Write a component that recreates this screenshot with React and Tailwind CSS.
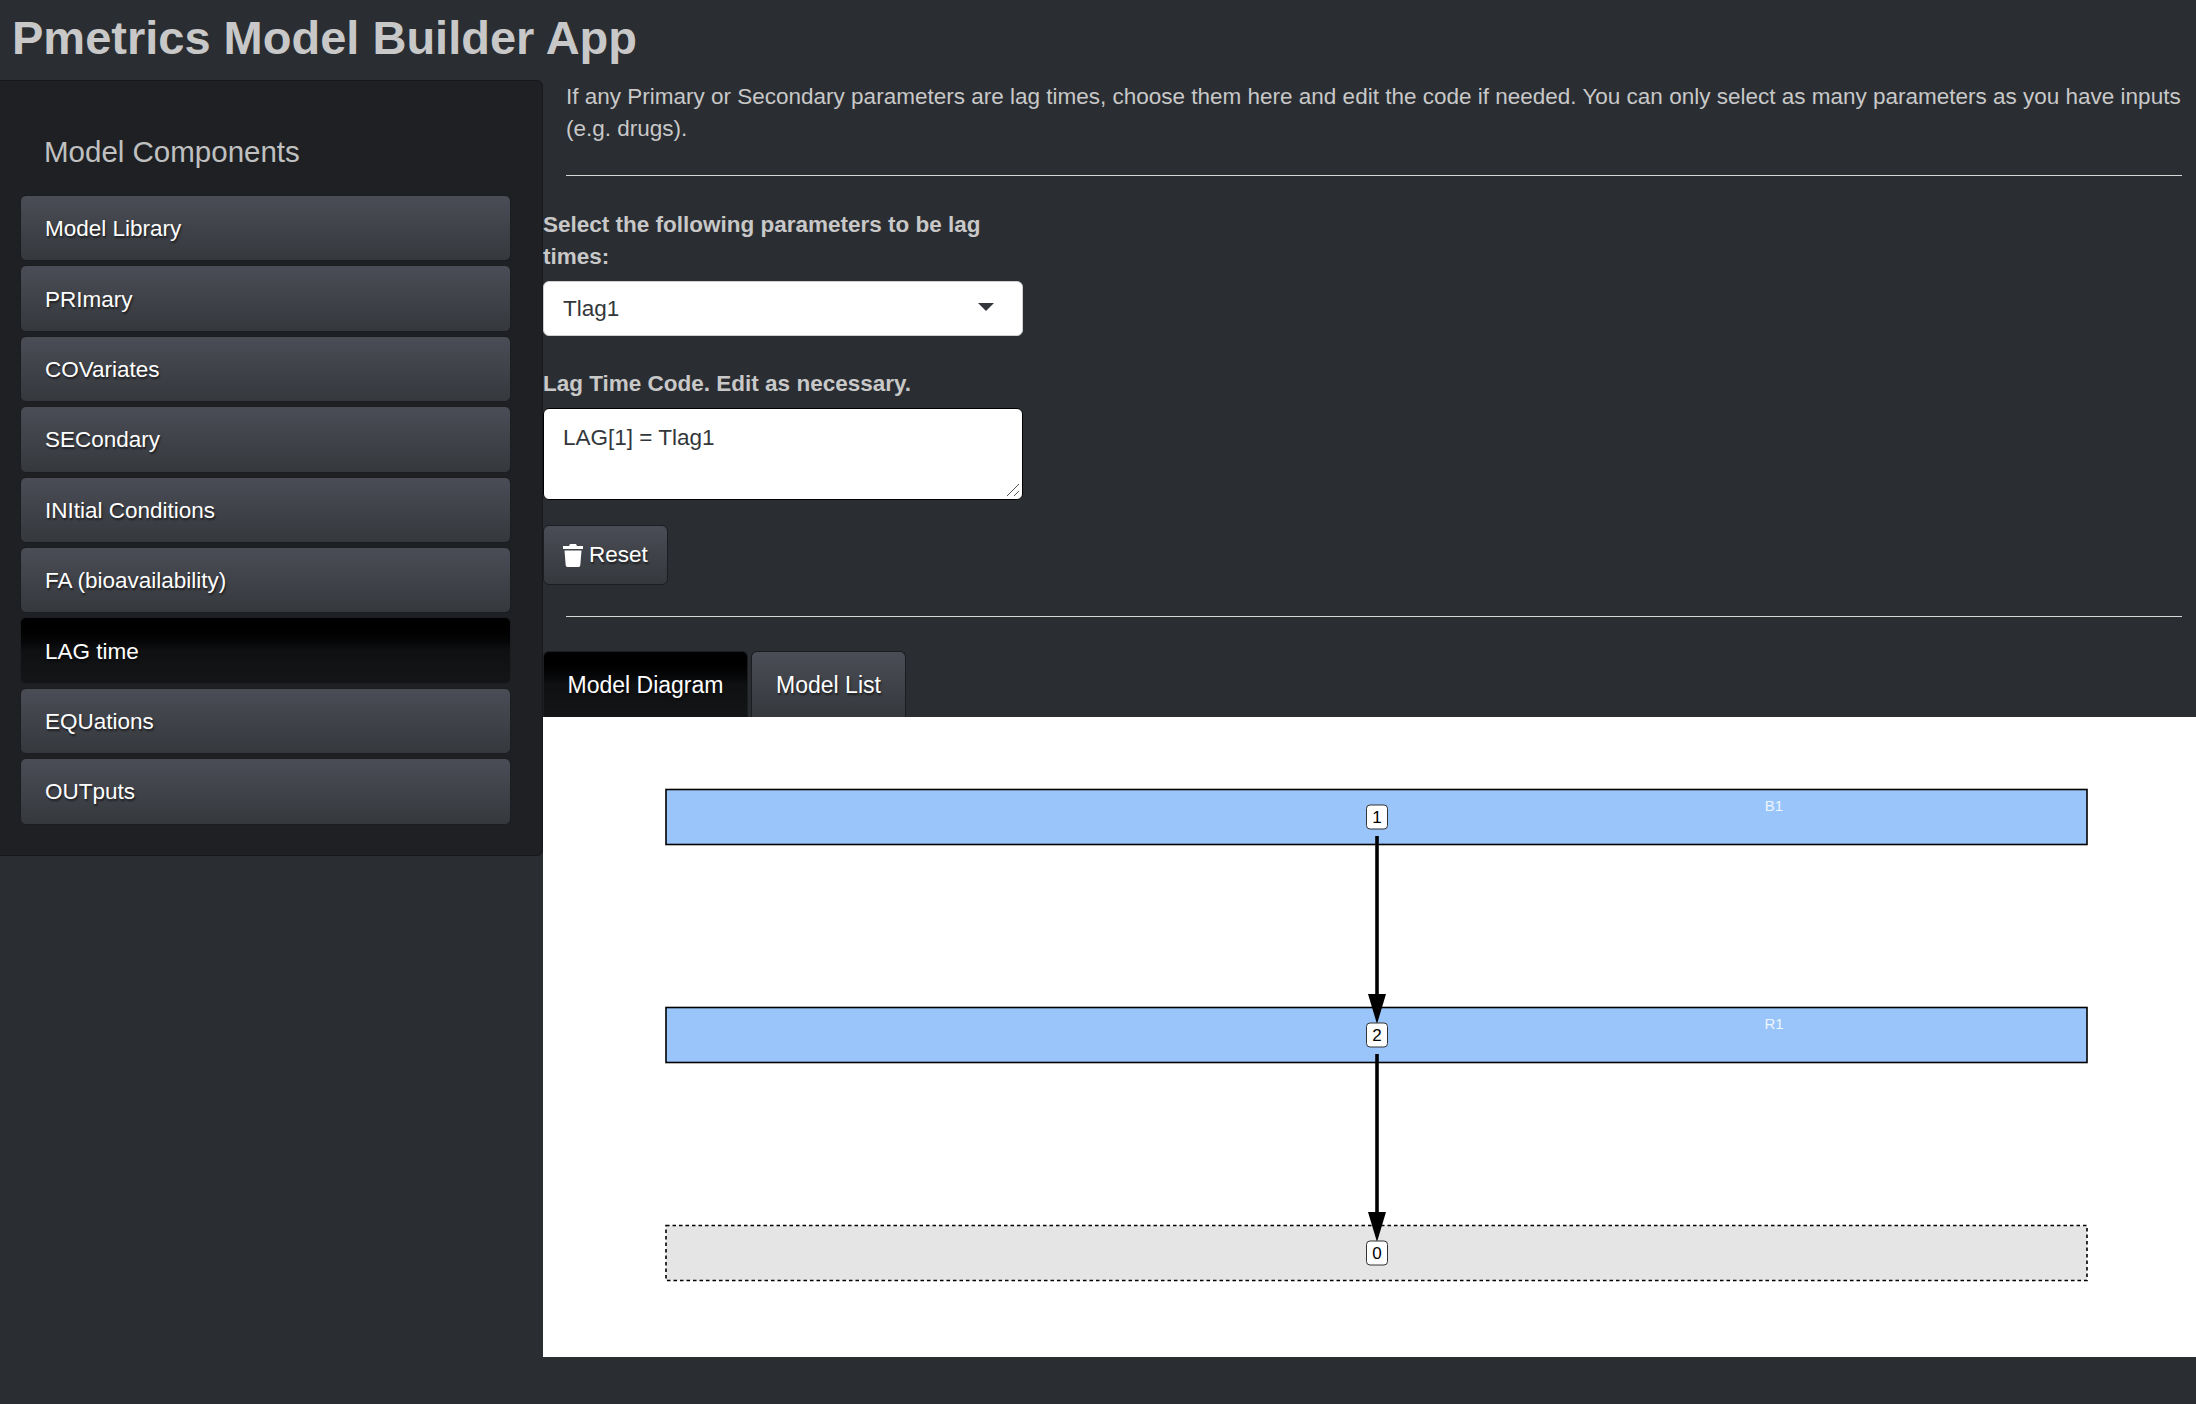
const components = [
    'Model Library',
    'PRImary',
    'COVariates',
    'SECondary',
    'INItial Conditions',
    'FA (bioavailability)',
    'LAG time',
    'EQUations',
    'OUTputs',
];

const idleButton = 'border-[#1b1d20] bg-gradient-to-b from-[#4a4d56] to-[#35383c]';
const activeButton = 'border-[#1b1d20] bg-gradient-to-b from-[#000000] via-[#0f1012] via-50% to-[#131517]';
const buttonText = 'text-white [text-shadow:1px_2px_2px_rgba(0,0,0,0.55)]';

function Compartment({ y, fill = '#9ac5fa', dashed = false }) {
    return (
        <rect
            x="123"
            y={y}
            width="1421"
            height="55"
            fill={fill}
            stroke="#000"
            strokeWidth="1.600"
            strokeDasharray={dashed ? '3.500 3' : undefined}
        />
    );
}

function Node({ y, label }) {
    return (
        <g>
            <rect x="823.5" y={y - 12} width="21" height="24" rx="3.5" fill="#fff" stroke="#333" strokeWidth="1" />
            <text x="834" y={y + 6} textAnchor="middle" fontSize="17" fill="#000" fontFamily="'Liberation Sans', sans-serif">
                {label}
            </text>
        </g>
    );
}

function Arrow({ from, to }) {
    return (
        <g>
            <line x1="834" y1={from} x2="834" y2={to - 20} stroke="#000" strokeWidth="3.600" />
            <polygon points={`825,${to - 30} 843,${to - 30} 834,${to}`} fill="#000" />
        </g>
    );
}

function ModelDiagram() {
    return (
        <svg className="block h-[640px] w-full" viewBox="0 0 1653 640">
            <Compartment y={72.5} />
            <Compartment y={290.5} />
            <Compartment y={508.5} fill="#e5e5e5" dashed />
            <text x="1231" y="94" textAnchor="middle" fontSize="15" fill="#eef5fe" fontFamily="'Liberation Sans', sans-serif">B1</text>
            <text x="1231" y="312" textAnchor="middle" fontSize="15" fill="#eef5fe" fontFamily="'Liberation Sans', sans-serif">R1</text>
            <Arrow from={119} to={307} />
            <Arrow from={337} to={525} />
            <Node y={100} label="1" />
            <Node y={318} label="2" />
            <Node y={536} label="0" />
        </svg>
    );
}

function TrashIcon() {
    return (
        <svg className="h-[23px] w-[20px] fill-white" viewBox="0 0 20 23">
            <path d="M7 0h6l1 2h6v3H0V2h6zM1.500 6.500h17l-1.200 14.800A1.800 1.800 0 0 1 15.500 23h-11a1.800 1.800 0 0 1-1.800-1.700z" />
        </svg>
    );
}

export default function App() {
    return (
        <div className="h-[1404px] w-[2196px] overflow-hidden bg-[#2a2d32] font-['Liberation_Sans',Arial,sans-serif] text-[22.5px] leading-[32px] text-[#c8c8c8]">
            <h1 className="h-[80px] pl-[12px] pt-[10px] text-[47px] font-bold leading-[56px] text-[#c8c8c8]">
                Pmetrics Model Builder App
            </h1>
            <div className="flex items-start">
                <aside className="h-[776px] w-[543px] shrink-0 rounded-r-[6px] border border-l-0 border-[#17181b] bg-[#1e2024] pl-[20px] pr-[31px] pt-[53px]">
                    <h2 className="mb-[25px] pl-[24px] text-[29.500px] font-normal leading-[36px] text-[#c0c0c0]">Model Components</h2>
                    <nav className="flex flex-col gap-[4px]">
                        {components.map((name) => (
                            <div
                                key={name}
                                className={`flex h-[66.400px] items-center rounded-[6px] border pl-[24px] pt-[2px] ${buttonText} ${
                                    name === 'LAG time' ? activeButton : idleButton
                                }`}
                            >
                                {name}
                            </div>
                        ))}
                    </nav>
                </aside>
                <main className="min-w-0 flex-1">
                    <div className="pl-[23px] pr-[14px]">
                        <p className="mr-[-6px] h-[64px] pt-[1px]">
                            If any Primary or Secondary parameters are lag times, choose them here and edit the code if needed. You can only select as many parameters as you have inputs (e.g. drugs).
                        </p>
                        <hr className="mt-[31px] border-t border-[#d8d8d8]" />
                    </div>
                    <div className="w-[480px] pt-[33px]">
                        <label className="block font-bold">Select the following parameters to be lag times:</label>
                        <div className="mt-[8px] flex h-[55px] items-center justify-between rounded-[6px] border border-[#cfcfcf] bg-white pl-[19px] pr-[28px] text-[#33373b]">
                            <span className="pt-[1px]">Tlag1</span>
                            <span className="mt-[-3px] h-0 w-0 border-x-[8px] border-t-[8px] border-x-transparent border-t-[#33373b]" />
                        </div>
                        <label className="mt-[32px] block font-bold">Lag Time Code. Edit as necessary.</label>
                        <div className="relative mt-[8px] h-[92px] rounded-[6px] border border-black bg-white px-[19px] pt-[13px] text-[#33373b]">
                            LAG[1] = Tlag1
                            <svg className="absolute bottom-[1px] right-[1px] h-[16px] w-[16px] stroke-[#555]" viewBox="0 0 16 16">
                                <path d="M2 14 14 2M9 14l5-5" strokeWidth="1" />
                            </svg>
                        </div>
                        <div
                            className={`mt-[25px] flex h-[60px] w-[125px] items-center gap-[6px] rounded-[6px] border pl-[19px] ${idleButton} ${buttonText}`}
                        >
                            <TrashIcon />
                            Reset
                        </div>
                    </div>
                    <div className="pl-[23px] pr-[14px]">
                        <hr className="mt-[31px] border-t border-[#d8d8d8]" />
                    </div>
                    <div className="mt-[34px] flex h-[66px] gap-[3px] text-[23px]">
                        <div className={`flex w-[205px] items-center justify-center rounded-t-[6px] border border-b-0 ${activeButton} ${buttonText}`}>
                            Model Diagram
                        </div>
                        <div className={`flex w-[155px] items-center justify-center rounded-t-[6px] border border-b-0 ${idleButton} ${buttonText}`}>
                            Model List
                        </div>
                    </div>
                    <div className="h-[640px] bg-white">
                        <ModelDiagram />
                    </div>
                </main>
            </div>
        </div>
    );
}
